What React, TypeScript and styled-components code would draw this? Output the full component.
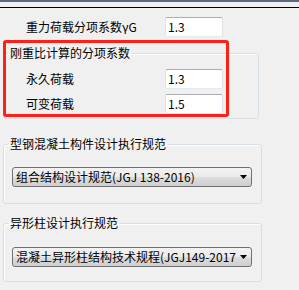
import React from 'react'
import styled, { createGlobalStyle } from 'styled-components'

const GlobalStyle = createGlobalStyle`
  html, body {
    margin: 0;
    padding: 0;
    background: #f0f0f0;
  }
  body {
    font-family: 'Noto Sans CJK SC', 'Noto Sans', sans-serif;
    font-size: 12px;
    color: #000;
  }
`

const Page = styled.div`
  position: relative;
  width: 299px;
  height: 290px;
  overflow: hidden;
  background: #f0f0f0;
`

// strip of the window above, cut off by the screenshot
const TopStrip = styled.div`
  height: 7px;
  background: linear-gradient(#5b6b7c 0 2px, #eef0f2 2px);
  border-bottom: 1px solid #000;
`

const Row = styled.div<{ $inset: number; $top: number }>`
  display: grid;
  grid-template-columns: ${(p) => 165 - p.$inset - (p.$inset === 26 ? 0 : 8)}px 58px;
  align-items: center;
  height: 20px;
  margin: ${(p) => p.$top}px 0 0 ${(p) => p.$inset}px;
`

const Label = styled.span`
  line-height: 14px;
  white-space: nowrap;
`

const Input = styled.div`
  box-sizing: border-box;
  height: 20px;
  padding: 0 2px;
  background: #fff;
  border: 1px solid #e2e3ea;
  border-top-color: #abadb3;
  border-bottom-color: #e3e9ef;
  border-radius: 2px;
  line-height: 18px;
`

const Group = styled.fieldset<{ $top: number; $width: number; $pt: number; $pb: number }>`
  box-sizing: border-box;
  width: ${(p) => p.$width}px;
  min-width: 0;
  margin: ${(p) => p.$top}px 0 0 3px;
  padding: ${(p) => p.$pt}px 4px ${(p) => p.$pb}px 4px;
  border: 1px solid #d5dfe5;
  border-radius: 3px;
  box-shadow: inset 1px 1px 0 #fff;
`

const Legend = styled.legend`
  padding: 0 2px;
  line-height: 14px;
  white-space: nowrap;
`

const Dropdown = styled.div`
  box-sizing: border-box;
  display: flex;
  align-items: center;
  width: 240px;
  height: 20px;
  margin-left: 4px;
  padding: 0 4px 0 3px;
  border: 1px solid #707070;
  border-radius: 3px;
  background: linear-gradient(#f2f2f2 0%, #ebebeb 50%, #dddddd 50%, #cfcfcf 100%);
`

const DropText = styled.span`
  flex: 1;
  min-width: 0;
  overflow: hidden;
  white-space: nowrap;
  line-height: 18px;
`

const Arrow = styled.svg`
  flex: none;
  margin-left: 4px;
`

// red annotation frame drawn over the dialog
const Highlight = styled.div`
  position: absolute;
  left: 3px;
  top: 40px;
  width: 226px;
  height: 77px;
  box-sizing: border-box;
  border: 3px solid #ff2018;
  border-radius: 3px;
  pointer-events: none;
`

function Select({ value }: { value: string }) {
  return (
    <Dropdown>
      <DropText>{value}</DropText>
      <Arrow width="7" height="4" viewBox="0 0 7 4">
        <path d="M0 0h7L3.5 4z" fill="#000" />
      </Arrow>
    </Dropdown>
  )
}

export default function App() {
  return (
    <Page>
      <GlobalStyle />
      <TopStrip />
      <Row $inset={26} $top={9}>
        <Label>重力荷载分项系数γG</Label>
        <Input>1.3</Input>
      </Row>

      <Group $top={9} $width={256} $pt={9} $pb={4}>
        <Legend>刚重比计算的分项系数</Legend>
        <Row $inset={18} $top={0}>
          <Label>永久荷载</Label>
          <Input>1.3</Input>
        </Row>
        <Row $inset={18} $top={5}>
          <Label>可变荷载</Label>
          <Input>1.5</Input>
        </Row>
      </Group>

      <Group $top={18} $width={259} $pt={16} $pb={16}>
        <Legend>型钢混凝土构件设计执行规范</Legend>
        <Select value="组合结构设计规范(JGJ 138-2016)" />
      </Group>

      <Group $top={12} $width={259} $pt={17} $pb={14}>
        <Legend>异形柱设计执行规范</Legend>
        <Select value="混凝土异形柱结构技术规程(JGJ149-2017)" />
      </Group>

      <Highlight />
    </Page>
  )
}
